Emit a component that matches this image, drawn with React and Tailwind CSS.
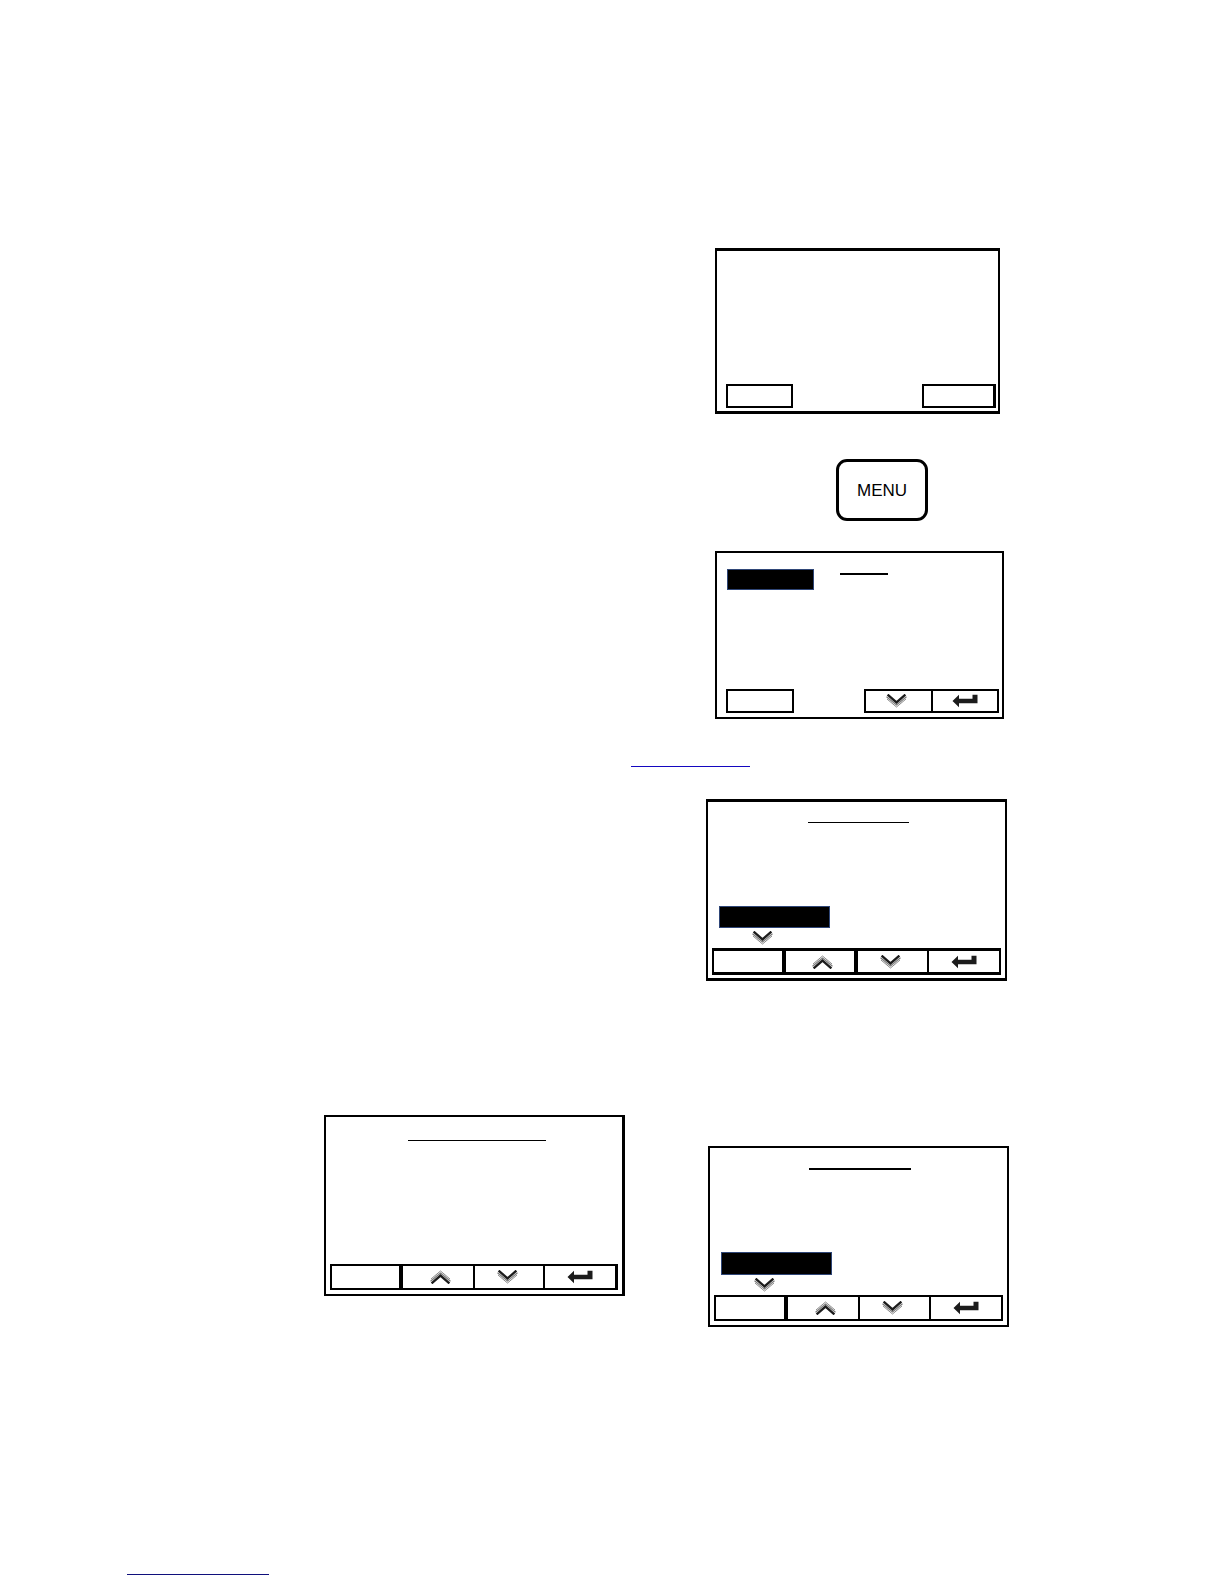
function Chevron({ up = false }) {
  return (
    <svg viewBox="0 0 21 14" className={`h-[14px] w-[21px] ${up ? 'rotate-180' : ''}`} fill="none">
      <path d="M1 5 10.5 13 20 5" stroke="#8a8a8a" strokeWidth="1" />
      <path d="M0.5 2.8 10.5 11 20.5 2.8" stroke="#7a7a7a" strokeWidth="1.1" />
      <path d="M1.6 0.6 10.5 8.4 19.4 0.6" stroke="#1c1c1c" strokeWidth="2.3" />
    </svg>
  )
}

function EnterArrow() {
  return (
    <svg viewBox="0 0 26 14" className="h-[14px] w-[26px]" fill="#1c1c1c">
      <path d="M0.5 7 7 0.7V4.8H20.5V0.7H25.5V9.2H7V13.3Z" />
    </svg>
  )
}

// Outlined soft key; empty unless an icon is passed.
function SoftKey({ label, className = '', children }) {
  return (
    <button type="button" aria-label={label} className={`flex items-center justify-center border-black ${className}`}>
      {children}
    </button>
  )
}

// Exit / up / down / enter strip along the bottom of a display.
function KeyBar({ className = '', wideDivider = 'border-r-2' }) {
  return (
    <div className={`mx-1 grid grid-cols-[72fr_72fr_71fr_70fr] border-2 border-black ${className}`}>
      <SoftKey label="Exit" className="border-r-4" />
      <SoftKey label="Up" className={`pl-1 ${wideDivider}`}>
        <Chevron up />
      </SoftKey>
      <SoftKey label="Down" className="border-r-2 pr-1">
        <Chevron />
      </SoftKey>
      <SoftKey label="Enter">
        <EnterArrow />
      </SoftKey>
    </div>
  )
}

function Display({ className = '', children }) {
  return (
    <section className={`flex flex-col justify-between border-2 border-black ${className}`}>
      {children}
    </section>
  )
}

// Selected menu line with the "more below" chevron under it.
function Selection({ className = '' }) {
  return (
    <div className="mt-auto flex flex-col gap-[3px] pb-[3px]">
      <div className={`ml-[11px] w-[111px] border border-[#2f4677] bg-black ${className}`} />
      <div className="ml-11">
        <Chevron />
      </div>
    </div>
  )
}

export default function App() {
  return (
    <div className="min-h-screen bg-white pt-[248px] pb-2 font-['Liberation_Sans',Arial,sans-serif] text-black">
      <main className="flex flex-col items-end pr-[215px]">
        <Display className="mr-[9px] min-h-[166px] w-[285px] border-y-3">
          <div className="mt-auto flex justify-between pr-[2px] pb-[3px] pl-[9px]">
            <SoftKey label="Left key" className="h-6 w-[67px] border-2" />
            <SoftKey label="Right key" className="h-6 w-[74px] border-2 border-r-3" />
          </div>
        </Display>

        <button
          type="button"
          className="mt-[45px] mr-[81px] h-[62px] w-[92px] rounded-[11px] border-3 border-black pt-[2px] text-[17px] leading-6"
        >
          MENU
        </button>

        <Display className="mt-[30px] mr-[5px] min-h-[168px] w-[289px]">
          <div className="flex gap-[26px] pt-4 pl-[10px]">
            <div className="h-[21px] w-[87px] border border-[#2f4677] bg-black" />
            <div className="mt-1 h-[2px] w-12 bg-black" />
          </div>
          <div className="flex justify-between pr-[3px] pb-1 pl-[9px]">
            <SoftKey label="Exit" className="h-6 w-[68px] border-2" />
            <div className="flex">
              <SoftKey label="Down" className="h-6 w-[69px] border-2 pr-1">
                <Chevron />
              </SoftKey>
              <SoftKey label="Enter" className="h-6 w-[66px] border-2 border-l-0">
                <EnterArrow />
              </SoftKey>
            </div>
          </div>
        </Display>

        <a href="#menu" aria-label="Menu" className="mt-6 mr-[259px] h-6 w-[119px] border-b border-[#1408c0]" />

        <Display className="mt-8 mr-[2px] min-h-[182px] w-[301px] border-y-3">
          <div className="mt-5 ml-[100px] h-px w-[101px] bg-black" />
          <Selection className="h-[22px]" />
          <KeyBar className="mb-[3px] h-[27px] border-y-3" wideDivider="border-r-4" />
        </Display>

        <div className="mt-[134px] flex items-start gap-[83px]">
          <Display className="min-h-[181px] w-[301px] border-r-3">
            <div className="mt-[23px] ml-[82px] h-px w-[138px] bg-black" />
            <KeyBar className="mb-1 h-[26px] border-r-3" />
          </Display>
          <Display className="mt-[31px] min-h-[181px] w-[301px]">
            <div className="mt-5 ml-[99px] h-[2px] w-[102px] bg-black" />
            <Selection className="h-[23px]" />
            <KeyBar className="mb-1 h-[26px]" />
          </Display>
        </div>
      </main>

      <footer className="mt-56 pl-[127px]">
        <a href="#contents" aria-label="Contents" className="block h-6 w-[142px] border-b border-[#10107c]" />
      </footer>
    </div>
  )
}
